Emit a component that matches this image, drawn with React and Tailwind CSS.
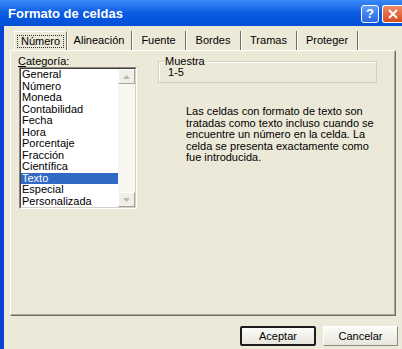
import React from 'react';

const categorias = [
  'General',
  'Número',
  'Moneda',
  'Contabilidad',
  'Fecha',
  'Hora',
  'Porcentaje',
  'Fracción',
  'Científica',
  'Texto',
  'Especial',
  'Personalizada',
];

const tabs = [
  { label: 'Número', w: 'w-[53px]' },
  { label: 'Alineación', w: 'w-[65px]' },
  { label: 'Fuente', w: 'w-[54px]' },
  { label: 'Bordes', w: 'w-[55px]' },
  { label: 'Tramas', w: 'w-[56px]' },
  { label: 'Proteger', w: 'w-[61px]' },
];

function ScrollButton({ down }) {
  return (
    <div className="h-[15px] w-[17px] flex items-center justify-center bg-[#f0efe8] border border-[#fff] border-r-[#a8a596] border-b-[#a8a596]">
      <svg width="7" height="4" viewBox="0 0 7 4">
        {down ? (
          <path d="M0 0h7L3.5 4z" fill="#bdb9a8" />
        ) : (
          <path d="M0 4h7L3.5 0z" fill="#bdb9a8" />
        )}
      </svg>
    </div>
  );
}

export default function App() {
  return (
    <div className="w-[402px] h-[349px] overflow-hidden flex flex-col bg-[#ece9d8] text-[11px] text-black font-['Liberation_Sans',Arial,sans-serif]">
      {/* barra de titulo */}
      <div className="h-[26px] shrink-0 flex items-center justify-between pl-[8px] bg-linear-to-b from-[#3a8af6] via-[#0a5be3] to-[#0350d6]">
        <span className="text-white font-bold text-[13px] leading-[13px] mt-[1px]">Formato de celdas</span>
        <div className="flex items-center gap-[3px] mt-[1px]">
          <div className="w-[18px] h-[18px] rounded-[3px] border border-white flex items-center justify-center bg-linear-to-b from-[#5c9cf8] to-[#2a66e4]">
            <span className="text-white font-bold text-[13px] leading-none">?</span>
          </div>
          <div className="w-[20px] h-[18px] rounded-l-[3px] border border-r-0 border-white flex items-center justify-center bg-linear-to-b from-[#f08a62] to-[#d64a1c]">
            <svg width="10" height="10" viewBox="0 0 10 10">
              <path d="M1 1L9 9M9 1L1 9" stroke="#fff" strokeWidth="2" />
            </svg>
          </div>
        </div>
      </div>

      {/* cuerpo */}
      <div className="flex-1 flex border-l-[4px] border-[#0843d3] pl-[6px]">
        <div className="w-[386px] flex flex-col">
          {/* pestañas */}
          <div className="mt-[5px] h-[19px] flex pl-[4px]">
            {tabs.map((t, i) => (
              <div
                key={t.label}
                className={
                  'h-full flex items-center justify-center border-r border-[#716f64] shadow-[1px_0_0_#fff] ' +
                  t.w +
                  (i === 0 ? ' border-l border-t border-l-white border-t-white' : '')
                }
              >
                {i === 0 ? (
                  <span className="px-[3px] leading-[11px] border border-dotted border-[#333]">{t.label}</span>
                ) : (
                  <span className="leading-[11px]">{t.label}</span>
                )}
              </div>
            ))}
          </div>

          {/* panel */}
          <div className="h-[266px] flex border-l border-t border-white border-r border-b border-r-[#716f64] border-b-[#716f64] shadow-[inset_-1px_-1px_0_#aca899] pl-[7px] pt-[4px]">
            <div className="w-[119px] flex flex-col">
              <div className="h-[12px] leading-[12px]">
                <span className="underline">C</span>ategoría:
              </div>
              <div className="ml-[1px] w-[118px] h-[142px] border border-[#8a8779] border-r-white border-b-white">
                <div className="h-full flex border border-[#404040] border-r-[#d4d0c8] border-b-[#d4d0c8] bg-white">
                  <div className="w-[97px] h-full overflow-hidden">
                    {categorias.map((c) => (
                      <div
                        key={c}
                        className={
                          'h-[11.5px] leading-[11.5px] pl-[1px] ' +
                          (c === 'Texto' ? 'bg-[#316ac5] text-white' : '')
                        }
                      >
                        {c}
                      </div>
                    ))}
                  </div>
                  <div className="w-[17px] h-full flex flex-col justify-between bg-[#f7f6f1]">
                    <ScrollButton />
                    <ScrollButton down />
                  </div>
                </div>
              </div>
            </div>

            <div className="ml-[21px] flex flex-col">
              <div className="relative mt-[6px] w-[219px] h-[22px] border border-[#d0d0bf] pl-[9px] pt-[4px] shadow-[inset_1px_1px_0_#fff]">
                <span className="absolute -top-[7px] left-[5px] bg-[#ece9d8] px-[1px] leading-[12px]">Muestra</span>
                <div className="leading-[12px]">1-5</div>
              </div>
              <p className="ml-[28px] mt-[23px] leading-[11.6px]">
                Las celdas con formato de texto son
                <br />
                tratadas como texto incluso cuando se
                <br />
                encuentre un número en la celda. La
                <br />
                celda se presenta exactamente como
                <br />
                fue introducida.
              </p>
            </div>
          </div>

          {/* botones */}
          <div className="mt-[10px] flex justify-end gap-[7px] -mr-[2px]">
            <button className="w-[76px] h-[20px] border-2 border-[#1c1c1c] rounded-[2px] bg-linear-to-b from-[#fbfbf8] to-[#e8e6dc] leading-none">
              Aceptar
            </button>
            <button className="w-[75px] h-[20px] border border-white border-r-[#8d8b7f] border-b-[#8d8b7f] bg-linear-to-b from-[#fbfbf8] to-[#e8e6dc] leading-none">
              Cancelar
            </button>
          </div>
        </div>
      </div>
    </div>
  );
}
